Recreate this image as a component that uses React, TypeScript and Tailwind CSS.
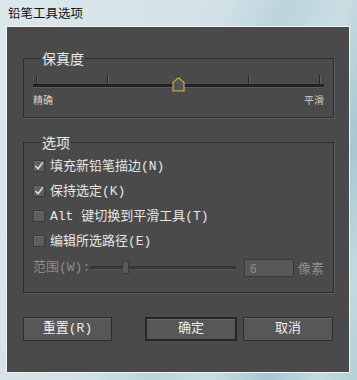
const cjk = { fontFamily: '"Noto Sans CJK SC", "Noto Sans", sans-serif' };
const mixed = { fontFamily: '"Liberation Mono", "Noto Sans CJK SC", monospace' };

function Check({ checked }: { checked?: boolean }) {
  return (
    <span className="flex h-[12px] w-[12px] items-center justify-center border border-[#3a3a3a] bg-[#5e5e5e] shadow-[inset_1px_1px_0_#6c6c6c]">
      {checked && (
        <svg width="10" height="10" viewBox="0 0 10 10">
          <path d="M1.5 5 L4 7.8 L8.8 1.6" fill="none" stroke="#dcdcdc" strokeWidth="1.6" />
        </svg>
      )}
    </span>
  );
}

function Row({ label, checked }: { label: string; checked?: boolean }) {
  return (
    <label className="flex h-6 items-center gap-[5px]">
      <Check checked={checked} />
      <span className="text-[13px] leading-none text-[#e6e6e6]" style={mixed}>
        {label}
      </span>
    </label>
  );
}

function Button({ children, width, primary }: { children: React.ReactNode; width: string; primary?: boolean }) {
  return (
    <button
      type="button"
      className={
        "flex h-[24px] items-center justify-center bg-[#575757] text-[13px] text-[#eeeeee] shadow-[inset_0_1px_0_#6a6a6a] " +
        width +
        (primary ? " border-2 border-[#262626]" : " border border-[#2c2c2c]")
      }
      style={mixed}
    >
      {children}
    </button>
  );
}

export default function App() {
  return (
    <div
      className="flex h-[380px] w-[357px] flex-col bg-[linear-gradient(110deg,#dce7ec_0%,#d2e1e7_45%,#bcd4dc_58%,#cadde3_70%,#a9c7d0_82%,#c4dae1_92%,#b5cfd7_100%)]"
      style={cjk}
    >
      <div className="flex h-[26px] items-center pl-[8px] pt-[1px] text-[12.5px] text-[#111]">铅笔工具选项</div>

      <div className="ml-[6px] h-[347px] w-[344px] border border-[#eef4f6]">
        <div className="flex h-full w-full flex-col items-start bg-[#4a4a4a]">
          <fieldset className="ml-[16px] mt-[23px] h-[68px] w-[311px] border border-[#2e2e2e] px-[9px] shadow-[1px_1px_0_#5a5a5a]">
            <legend className="ml-[8px] px-[1px] text-[14px] leading-[16px] text-[#eaeaea]">保真度</legend>
            <div className="relative mt-[9px] h-[16px]">
              <div className="flex h-[9px] justify-between px-[3px]">
                {[0, 1, 2, 3, 4].map((i) => (
                  <span key={i} className="flex h-full">
                    <span className="w-px bg-[#262626]" />
                    <span className="w-px bg-[#606060]" />
                  </span>
                ))}
              </div>
              <div className="h-[3px] w-full bg-[#232323] shadow-[0_1px_0_#5c5c5c]" />
              <svg className="absolute left-[139px] top-[2px]" width="13" height="15" viewBox="0 0 13 15">
                <path d="M6.5 0.8 L12 5.5 L12 13.8 L1 13.8 L1 5.5 Z" fill="#545454" stroke="#c9a04a" strokeWidth="1.3" />
              </svg>
            </div>
            <div className="mt-[3px] flex justify-between text-[10px] leading-[12px] text-[#cfcfcf]">
              <span>精确</span>
              <span>平滑</span>
            </div>
          </fieldset>

          <fieldset className="ml-[16px] mt-[16px] h-[159px] w-[311px] border border-[#2e2e2e] px-[9px] shadow-[1px_1px_0_#5a5a5a]">
            <legend className="ml-[8px] px-[1px] text-[14px] leading-[16px] text-[#eaeaea]">选项</legend>
            <div className="flex flex-col gap-px pt-[4px]">
              <Row label="填充新铅笔描边(N)" checked />
              <Row label="保持选定(K)" checked />
              <Row label="Alt 键切换到平滑工具(T)" />
              <Row label="编辑所选路径(E)" />
            </div>
            <div className="mt-[3px] flex h-6 items-center whitespace-nowrap">
              <span className="w-[57px] shrink-0 text-[13px] text-[#8c8c8c]" style={mixed}>
                范围(W):
              </span>
              <div className="relative h-[14px] w-[146px] shrink-0">
                <div className="mt-[5px] h-[3px] w-full bg-[#363636] shadow-[0_1px_0_#555]" />
                <span className="absolute left-[32px] top-0 h-[13px] w-[7px] border border-[#3a3a3a] bg-[#5a5a5a]" />
              </div>
              <span className="ml-[8px] flex h-[18px] w-[50px] shrink-0 items-center border border-[#3a3a3a] bg-[#585858] pl-[5px] text-[12px] text-[#8e8e8e]">
                6
              </span>
              <span className="ml-[4px] shrink-0 text-[13px] text-[#909090]">像素</span>
            </div>
          </fieldset>

          <div className="mt-[24px] flex">
            <div className="ml-[16px]">
              <Button width="w-[89px]">重置(R)</Button>
            </div>
            <div className="ml-[33px]">
              <Button width="w-[92px]" primary>
                确定
              </Button>
            </div>
            <div className="ml-[6px]">
              <Button width="w-[90px]">取消</Button>
            </div>
          </div>
        </div>
      </div>
    </div>
  );
}
